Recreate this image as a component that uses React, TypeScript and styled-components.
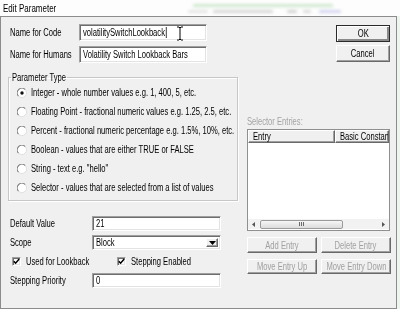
import styled, { createGlobalStyle } from 'styled-components';

const GlobalStyle = createGlobalStyle`
  html, body {
    margin: 0;
    padding: 0;
    background: #ffffff;
  }
  body {
    font-family: "Liberation Sans", Arial, sans-serif;
    font-size: 10px;
    color: #000000;
  }
`;

const parameterTypes = [
  { label: 'Integer - whole number values e.g. 1, 400, 5, etc.', checked: true },
  { label: 'Floating Point - fractional numeric values e.g. 1.25, 2.5, etc.', checked: false },
  { label: 'Percent - fractional numeric percentage e.g. 1.5%, 10%, etc.', checked: false },
  { label: 'Boolean - values that are either TRUE or FALSE', checked: false },
  { label: 'String - text e.g. "hello"', checked: false },
  { label: 'Selector - values that are selected from a list of values', checked: false },
];

// the old dialog font is much narrower than Arial, so squeeze text horizontally
const T = styled.span<{ $center?: boolean }>`
  display: inline-block;
  white-space: nowrap;
  transform: scaleX(0.76);
  transform-origin: ${(p) => (p.$center ? 'center' : 'left')} center;
`;

const Radio = ({ checked }: { checked: boolean }) => (
  <svg width="10" height="10" viewBox="0 0 10 10">
    <circle cx="5" cy="5" r="4.3" fill="#ffffff" />
    <path d="M1.6 8.2 A4.3 4.3 0 0 1 8.2 1.6" stroke="#7a7a7a" strokeWidth="1.1" fill="none" />
    <path d="M8.2 1.6 A4.3 4.3 0 0 1 1.6 8.2" stroke="#e0e0e0" strokeWidth="1" fill="none" />
    {checked && <circle cx="5" cy="5" r="1.7" fill="#111111" />}
  </svg>
);

const CheckMark = () => (
  <svg width="7" height="7" viewBox="0 0 7 7">
    <path d="M0.8 3.2 L2.6 5.2 L6.2 1" stroke="#000000" strokeWidth="1.5" fill="none" />
  </svg>
);

const IBeam = () => (
  <svg width="8" height="15" viewBox="0 0 8 15">
    <path d="M1 1 H3 L4 2 L5 1 H7 M4 2 V13 M1 14 H3 L4 13 L5 14 H7" stroke="#ffffff" strokeWidth="2.4" fill="none" />
    <path d="M1 1 H3 L4 2 L5 1 H7 M4 2 V13 M1 14 H3 L4 13 L5 14 H7" stroke="#000000" strokeWidth="1" fill="none" />
  </svg>
);

export default function App() {
  return (
    <>
      <GlobalStyle />
      <Screen>
        <TitleStrip>
          <Title>
            <T>Edit Parameter</T>
          </Title>
          <Smudges>
            <SmudgeLine>
              <Smudge $w={140} $color="#cfe7cf" $gap={10} />
            </SmudgeLine>
            <SmudgeLine>
              <Smudge $w={20} $color="#e4e4e4" $gap={5} />
              <Smudge $w={60} $color="#d6d6d6" $gap={5} />
              <Smudge $w={10} $color="#d2d2d2" $gap={14} />
              <Smudge $w={8} $color="#dadada" $gap={6} />
              <Smudge $w={22} $color="#d4d4f0" $gap={8} />
            </SmudgeLine>
          </Smudges>
        </TitleStrip>

        <WindowRow>
          <Dialog>
            <TopSection>
              <NameGrid>
                <T>Name for Code</T>
                <TextBox>
                  <T>
                    volatilitySwitchLookback<Caret />
                  </T>
                  <Pointer>
                    <IBeam />
                  </Pointer>
                </TextBox>
                <T>Name for Humans</T>
                <TextBox>
                  <T>Volatility Switch Lookback Bars</T>
                </TextBox>
              </NameGrid>
              <ButtonStack>
                <PushButton $default>
                  <T $center>OK</T>
                </PushButton>
                <PushButton>
                  <T $center>Cancel</T>
                </PushButton>
              </ButtonStack>
            </TopSection>

            <MainRow>
              <LeftCol>
                <GroupBox>
                  <GroupLegend>
                    <T>Parameter Type</T>
                  </GroupLegend>
                  {parameterTypes.map((p) => (
                    <RadioRow key={p.label}>
                      <Radio checked={p.checked} />
                      <T>{p.label}</T>
                    </RadioRow>
                  ))}
                </GroupBox>

                <FormRows>
                  <FormRow>
                    <FormLabel>
                      <T>Default Value</T>
                    </FormLabel>
                    <SmallBox>
                      <T>21</T>
                    </SmallBox>
                  </FormRow>
                  <FormRow>
                    <FormLabel>
                      <T>Scope</T>
                    </FormLabel>
                    <Combo>
                      <ComboText>
                        <T>Block</T>
                      </ComboText>
                      <ComboButton>
                        <svg width="7" height="4" viewBox="0 0 7 4">
                          <path d="M0 0 H7 L3.5 4 Z" fill="#000000" />
                        </svg>
                      </ComboButton>
                    </Combo>
                  </FormRow>
                  <FormRow>
                    <CheckItem $width={103}>
                      <CheckBox>
                        <CheckMark />
                      </CheckBox>
                      <T>Used for Lookback</T>
                    </CheckItem>
                    <CheckItem>
                      <CheckBox>
                        <CheckMark />
                      </CheckBox>
                      <T>Stepping Enabled</T>
                    </CheckItem>
                  </FormRow>
                  <FormRow>
                    <FormLabel>
                      <T>Stepping Priority</T>
                    </FormLabel>
                    <SmallBox>
                      <T>0</T>
                    </SmallBox>
                  </FormRow>
                </FormRows>
              </LeftCol>

              <RightCol>
                <DisabledLabel>
                  <T>Selector Entries:</T>
                </DisabledLabel>
                <ListView>
                  <ListHeader>
                    <HeaderCell $width={87}>
                      <T>Entry</T>
                    </HeaderCell>
                    <HeaderCell>
                      <T>Basic Constant</T>
                    </HeaderCell>
                  </ListHeader>
                  <ListBody />
                  <ScrollBar>
                    <ScrollArrow>
                      <svg width="3" height="5" viewBox="0 0 3 5">
                        <path d="M3 0 V5 L0 2.5 Z" fill="#555555" />
                      </svg>
                    </ScrollArrow>
                    <ScrollTrack>
                      <Thumb>
                        <Grip />
                        <Grip />
                        <Grip />
                      </Thumb>
                    </ScrollTrack>
                    <ScrollArrow>
                      <svg width="3" height="5" viewBox="0 0 3 5">
                        <path d="M0 0 V5 L3 2.5 Z" fill="#555555" />
                      </svg>
                    </ScrollArrow>
                  </ScrollBar>
                </ListView>
                <EntryButtons>
                  <EntryButton $height={16}>
                    <T $center>Add Entry</T>
                  </EntryButton>
                  <EntryButton $height={16}>
                    <T $center>Delete Entry</T>
                  </EntryButton>
                  <EntryButton $height={15}>
                    <T $center>Move Entry Up</T>
                  </EntryButton>
                  <EntryButton $height={15}>
                    <T $center>Move Entry Down</T>
                  </EntryButton>
                </EntryButtons>
              </RightCol>
            </MainRow>
          </Dialog>
          <SideEdge />
        </WindowRow>
      </Screen>
    </>
  );
}

const Screen = styled.div`
  width: 400px;
  height: 312px;
  overflow: hidden;
  display: flex;
  flex-direction: column;
  background: #ffffff;
`;

const TitleStrip = styled.div`
  height: 16px;
  flex: 0 0 16px;
  display: flex;
  align-items: center;
  background: #fcfdfc;
  overflow: hidden;
`;

const Title = styled.div`
  font-size: 10.5px;
  line-height: 16px;
  padding-left: 3px;
  width: 110px;
`;

const Smudges = styled.div`
  display: flex;
  flex-direction: column;
  gap: 3px;
  margin-left: 70px;
  filter: blur(1.4px);
`;

const SmudgeLine = styled.div`
  display: flex;
`;

const Smudge = styled.div<{ $w: number; $color: string; $gap?: number }>`
  width: ${(p) => p.$w}px;
  height: 3px;
  margin-left: ${(p) => p.$gap ?? 0}px;
  background: ${(p) => p.$color};
  border-radius: 2px;
`;

const WindowRow = styled.div`
  display: flex;
  height: 293px;
  flex: 0 0 293px;
`;

const Dialog = styled.div`
  box-sizing: border-box;
  width: 397px;
  height: 293px;
  background: #f0f0f0;
  border: 1px solid #8c8c8c;
  padding: 7px 6px 0 7px;
`;

const SideEdge = styled.div`
  flex: 1;
  background: #eef5ee;
`;

const TopSection = styled.div`
  display: flex;
  align-items: flex-start;
`;

const NameGrid = styled.div`
  display: grid;
  grid-template-columns: 69px 128px;
  row-gap: 5px;
  align-items: center;
  padding-left: 2px;
`;

const sunken = `
  background: #ffffff;
  border: 1px solid;
  border-color: #a0a0a0 #ffffff #ffffff #a0a0a0;
  box-shadow: inset 1px 1px #6d6d6d, inset -1px -1px #e3e3e3;
  box-sizing: border-box;
`;

const TextBox = styled.div`
  ${sunken}
  position: relative;
  height: 17px;
  display: flex;
  align-items: center;
  padding-left: 3px;
  overflow: visible;
`;

const Caret = styled.span`
  display: inline-block;
  width: 1.4px;
  height: 11px;
  margin-left: 1px;
  vertical-align: -2px;
  background: #000000;
`;

const Pointer = styled.div`
  position: absolute;
  left: 96px;
  top: 1px;
  line-height: 0;
`;

const ButtonStack = styled.div`
  margin-left: auto;
  margin-top: 1px;
  display: flex;
  flex-direction: column;
  gap: 3px;
`;

const raised = `
  background: #f0f0f0;
  border: 1px solid;
  border-color: #ffffff #696969 #696969 #ffffff;
  box-shadow: inset -1px -1px #a0a0a0;
  box-sizing: border-box;
  display: flex;
  align-items: center;
  justify-content: center;
`;

const PushButton = styled.div<{ $default?: boolean }>`
  ${raised}
  width: 54px;
  height: 17px;
  ${(p) =>
    p.$default &&
    `
    border-color: #2a2a2a;
    box-shadow: inset 1px 1px #ffffff, inset -2px -2px #8a8a8a;
  `}
`;

const MainRow = styled.div`
  display: flex;
  margin-top: 9px;
`;

const LeftCol = styled.div`
  width: 230px;
  display: flex;
  flex-direction: column;
`;

const GroupBox = styled.fieldset`
  margin: 0;
  padding: 0 0 3px 2px;
  min-width: 0;
  border: 1px solid #c6c6c6;
  box-shadow: inset 1px 1px #ffffff, 1px 1px #ffffff;
`;

const GroupLegend = styled.legend`
  padding: 0 1px;
  line-height: 11px;
  width: 54px;
`;

const RadioRow = styled.div`
  height: 19px;
  display: flex;
  align-items: center;
  gap: 4px;
  padding-left: 6px;
  svg {
    flex: 0 0 10px;
  }
`;

const FormRows = styled.div`
  margin-top: 13px;
  display: flex;
  flex-direction: column;
  padding-left: 2px;
`;

const FormRow = styled.div`
  height: 19px;
  display: flex;
  align-items: center;
`;

const FormLabel = styled.div`
  width: 82px;
`;

const SmallBox = styled.div`
  ${sunken}
  width: 129px;
  height: 15px;
  display: flex;
  align-items: center;
  padding-left: 3px;
`;

const Combo = styled.div`
  ${sunken}
  width: 129px;
  height: 15px;
  display: flex;
  align-items: stretch;
  padding: 2px 2px 2px 3px;
`;

const ComboText = styled.div`
  flex: 1;
  display: flex;
  align-items: center;
`;

const ComboButton = styled.div`
  ${raised}
  width: 12px;
`;

const CheckItem = styled.div<{ $width?: number }>`
  display: flex;
  align-items: center;
  gap: 5px;
  padding-left: 2px;
  width: ${(p) => (p.$width ? `${p.$width}px` : 'auto')};
`;

const CheckBox = styled.div`
  ${sunken}
  width: 9px;
  height: 9px;
  flex: 0 0 9px;
  display: flex;
  align-items: center;
  justify-content: center;
`;

const RightCol = styled.div`
  margin-left: 9px;
  width: 143px;
  padding-top: 44px;
  display: flex;
  flex-direction: column;
`;

const DisabledLabel = styled.div`
  color: #a3a3a3;
  line-height: 12px;
`;

const ListView = styled.div`
  margin-top: 1px;
  height: 102px;
  border: 1px solid #8e8f8f;
  background: #ffffff;
  display: flex;
  flex-direction: column;
  box-sizing: border-box;
  overflow: hidden;
`;

const ListHeader = styled.div`
  height: 13px;
  display: flex;
  flex: 0 0 13px;
`;

const HeaderCell = styled.div<{ $width?: number }>`
  ${raised}
  justify-content: flex-start;
  padding-left: 4px;
  overflow: hidden;
  ${(p) => (p.$width ? `width: ${p.$width}px; flex: 0 0 ${p.$width}px;` : 'flex: 1;')}
`;

const ListBody = styled.div`
  flex: 1;
`;

const ScrollBar = styled.div`
  height: 10px;
  flex: 0 0 10px;
  display: flex;
  align-items: center;
  background: #f2f2f2;
  margin: 0 0 1px;
`;

const ScrollArrow = styled.div`
  width: 13px;
  display: flex;
  justify-content: center;
`;

const ScrollTrack = styled.div`
  flex: 1;
  display: flex;
  padding-right: 35px;
`;

const Thumb = styled.div`
  width: 83px;
  height: 9px;
  border: 1px solid #9b9b9b;
  border-radius: 2px;
  background: linear-gradient(#f6f6f6, #dcdcdc);
  box-sizing: border-box;
  display: flex;
  justify-content: center;
  align-items: center;
  gap: 1px;
`;

const Grip = styled.div`
  width: 1px;
  height: 4px;
  background: #6a6a6a;
`;

const EntryButtons = styled.div`
  margin-top: 6px;
  display: grid;
  grid-template-columns: 70px 70px;
  column-gap: 4px;
  row-gap: 6px;
`;

const EntryButton = styled.div<{ $height: number }>`
  ${raised}
  height: ${(p) => p.$height}px;
  color: #a0a0a0;
  overflow: visible;
`;
